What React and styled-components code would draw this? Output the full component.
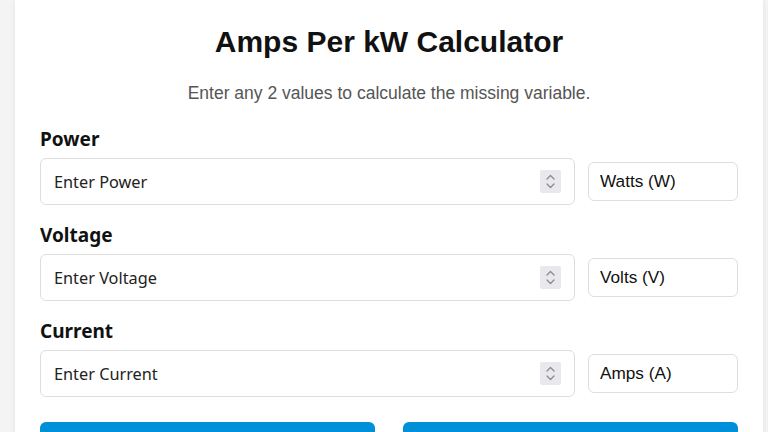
import React from "react";
import styled, { createGlobalStyle } from "styled-components";

const Global = createGlobalStyle`
  html, body { margin: 0; padding: 0; background: #f4f4f4; }
  body { font-family: "Liberation Sans", Arial, sans-serif; }
  * { box-sizing: border-box; }
`;

const Card = styled.div`
  margin-left: 15px;
  width: 748px;
  min-height: 500px;
  background: #ffffff;
  box-shadow: 0 0 6px rgba(0, 0, 0, 0.08);
  padding: 24px 25px 0;
`;

const Title = styled.h1`
  margin: 0;
  text-align: center;
  font-family: "Liberation Sans", Arial, sans-serif;
  font-size: 30px;
  line-height: 36px;
  font-weight: 700;
  color: #111;
`;

const Subtitle = styled.p`
  margin: 23px 0 0;
  text-align: center;
  font-size: 17.5px;
  line-height: 20px;
  color: #555;
`;

const Field = styled.div`
  margin-top: ${(p) => (p.$first ? "25px" : "19px")};
`;

const Label = styled.label`
  display: block;
  font-family: "Noto Sans", "Open Sans", sans-serif;
  font-weight: 700;
  font-size: 19px;
  line-height: 23px;
  color: #111;
  margin-bottom: 7px;
`;

const Row = styled.div`
  display: flex;
  align-items: center;
  gap: 13px;
`;

const InputBox = styled.div`
  flex: 1;
  height: 47px;
  display: flex;
  align-items: center;
  border: 1px solid #dedede;
  border-radius: 6px;
  padding: 0 13px;
  background: #fff;
`;

const Input = styled.input`
  flex: 1;
  border: none;
  outline: none;
  background: transparent;
  font-family: "Noto Sans", "Open Sans", sans-serif;
  font-size: 16.3px;
  color: #222;
  padding: 0;
  &::placeholder { color: #222; }
`;

const Spinner = styled.div`
  width: 21px;
  height: 23px;
  background: #e9e9ed;
  border-radius: 2px;
  display: flex;
  align-items: center;
  justify-content: center;
`;

const Unit = styled.div`
  width: 150px;
  height: 39px;
  display: flex;
  align-items: center;
  border: 1px solid #dedede;
  border-radius: 6px;
  padding: 0 11px;
  font-family: "Liberation Sans", Arial, sans-serif;
  font-size: 17.2px;
  color: #111;
`;

const Buttons = styled.div`
  display: flex;
  gap: 28px;
  margin-top: 25px;
`;

const Button = styled.button`
  flex: 1;
  height: 60px;
  border: none;
  border-radius: 6px;
  background: #0090d9;
  color: #fff;
  font-family: "Liberation Sans", Arial, sans-serif;
  font-size: 16px;
  font-weight: 700;
`;

const Chevrons = () => (
  <svg width="11" height="17" viewBox="0 0 11 17" fill="none" stroke="#8a8a90" strokeWidth="1.3" strokeLinecap="round" strokeLinejoin="round">
    <path d="M2 6 L5.5 2.5 L9 6" />
    <path d="M2 11 L5.5 14.5 L9 11" />
  </svg>
);

const fields = [
  { label: "Power", ph: "Enter Power", unit: "Watts (W)" },
  { label: "Voltage", ph: "Enter Voltage", unit: "Volts (V)" },
  { label: "Current", ph: "Enter Current", unit: "Amps (A)" },
];

export default function App() {
  return (
    <>
      <Global />
      <Card>
        <Title>Amps Per kW Calculator</Title>
        <Subtitle>Enter any 2 values to calculate the missing variable.</Subtitle>
        {fields.map((f, i) => (
          <Field key={f.label} $first={i === 0}>
            <Label>{f.label}</Label>
            <Row>
              <InputBox>
                <Input type="text" placeholder={f.ph} />
                <Spinner><Chevrons /></Spinner>
              </InputBox>
              <Unit>{f.unit}</Unit>
            </Row>
          </Field>
        ))}
        <Buttons>
          <Button>Calculate</Button>
          <Button>Reset</Button>
        </Buttons>
      </Card>
    </>
  );
}
